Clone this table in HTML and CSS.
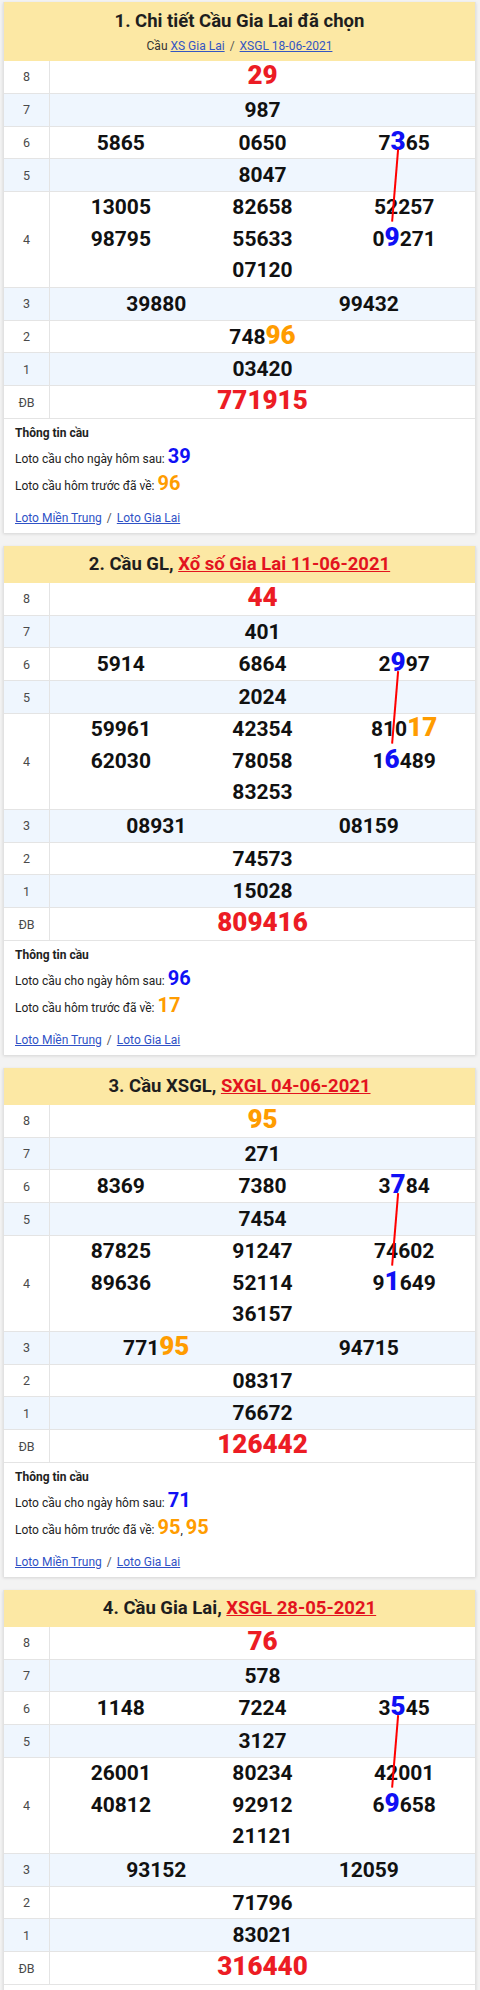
FILE: index.html
```html
<!DOCTYPE html>
<html lang="vi">
<head>
<meta charset="utf-8">
<title>Cầu Gia Lai</title>
<link rel="stylesheet" href="styles.css">
</head>
<body>
<div class="page">

<section class="card">
  <header class="card-head">
    <h2 class="card-title">1. Chi tiết Cầu Gia Lai đã chọn</h2>
    <p class="card-sub">Cầu <a href="#">XS Gia Lai</a><span class="sep">/</span><a href="#">XSGL 18-06-2021</a></p>
  </header>
  <div class="results">
    <div class="row"><div class="lbl">8</div><div class="val c1"><span><b class="big red">29</b></span></div></div>
    <div class="row alt"><div class="lbl">7</div><div class="val c1"><span>987</span></div></div>
    <div class="row"><div class="lbl">6</div><div class="val c3"><span>5865</span><span>0650</span><span>7<b class="big blue from">3</b>65</span></div></div>
    <div class="row alt"><div class="lbl">5</div><div class="val c1"><span>8047</span></div></div>
    <div class="row"><div class="lbl">4</div><div class="val c3 multi"><span>13005</span><span>82658</span><span>52257</span><span>98795</span><span>55633</span><span>0<b class="big blue to">9</b>271</span><span class="mid">07120</span></div></div>
    <div class="row alt"><div class="lbl">3</div><div class="val c2"><span>39880</span><span>99432</span></div></div>
    <div class="row"><div class="lbl">2</div><div class="val c1"><span>748<b class="big orange">96</b></span></div></div>
    <div class="row alt"><div class="lbl">1</div><div class="val c1"><span>03420</span></div></div>
    <div class="row"><div class="lbl">ĐB</div><div class="val c1"><span><b class="big red">771915</b></span></div></div>
    <svg class="bridge"><line stroke="#ff0000" stroke-width="2"/></svg>
  </div>
  <div class="info">
    <p class="info-title">Thông tin cầu</p>
    <p class="info-line">Loto cầu cho ngày hôm sau: <b class="blue">39</b></p>
    <p class="info-line">Loto cầu hôm trước đã về: <b class="orange">96</b></p>
    <p class="links"><a href="#">Loto Miền Trung</a><span class="sep">/</span><a href="#">Loto Gia Lai</a></p>
  </div>
</section>

<section class="card">
  <header class="card-head">
    <h2 class="card-title">2. Cầu GL, <a href="#" class="red-link">Xổ số Gia Lai 11-06-2021</a></h2>
  </header>
  <div class="results">
    <div class="row"><div class="lbl">8</div><div class="val c1"><span><b class="big red">44</b></span></div></div>
    <div class="row alt"><div class="lbl">7</div><div class="val c1"><span>401</span></div></div>
    <div class="row"><div class="lbl">6</div><div class="val c3"><span>5914</span><span>6864</span><span>2<b class="big blue from">9</b>97</span></div></div>
    <div class="row alt"><div class="lbl">5</div><div class="val c1"><span>2024</span></div></div>
    <div class="row"><div class="lbl">4</div><div class="val c3 multi"><span>59961</span><span>42354</span><span>810<b class="big orange">17</b></span><span>62030</span><span>78058</span><span>1<b class="big blue to">6</b>489</span><span class="mid">83253</span></div></div>
    <div class="row alt"><div class="lbl">3</div><div class="val c2"><span>08931</span><span>08159</span></div></div>
    <div class="row"><div class="lbl">2</div><div class="val c1"><span>74573</span></div></div>
    <div class="row alt"><div class="lbl">1</div><div class="val c1"><span>15028</span></div></div>
    <div class="row"><div class="lbl">ĐB</div><div class="val c1"><span><b class="big red">809416</b></span></div></div>
    <svg class="bridge"><line stroke="#ff0000" stroke-width="2"/></svg>
  </div>
  <div class="info">
    <p class="info-title">Thông tin cầu</p>
    <p class="info-line">Loto cầu cho ngày hôm sau: <b class="blue">96</b></p>
    <p class="info-line">Loto cầu hôm trước đã về: <b class="orange">17</b></p>
    <p class="links"><a href="#">Loto Miền Trung</a><span class="sep">/</span><a href="#">Loto Gia Lai</a></p>
  </div>
</section>

<section class="card">
  <header class="card-head">
    <h2 class="card-title">3. Cầu XSGL, <a href="#" class="red-link">SXGL 04-06-2021</a></h2>
  </header>
  <div class="results">
    <div class="row"><div class="lbl">8</div><div class="val c1"><span><b class="big orange">95</b></span></div></div>
    <div class="row alt"><div class="lbl">7</div><div class="val c1"><span>271</span></div></div>
    <div class="row"><div class="lbl">6</div><div class="val c3"><span>8369</span><span>7380</span><span>3<b class="big blue from">7</b>84</span></div></div>
    <div class="row alt"><div class="lbl">5</div><div class="val c1"><span>7454</span></div></div>
    <div class="row"><div class="lbl">4</div><div class="val c3 multi"><span>87825</span><span>91247</span><span>74602</span><span>89636</span><span>52114</span><span>9<b class="big blue to">1</b>649</span><span class="mid">36157</span></div></div>
    <div class="row alt"><div class="lbl">3</div><div class="val c2"><span>771<b class="big orange">95</b></span><span>94715</span></div></div>
    <div class="row"><div class="lbl">2</div><div class="val c1"><span>08317</span></div></div>
    <div class="row alt"><div class="lbl">1</div><div class="val c1"><span>76672</span></div></div>
    <div class="row"><div class="lbl">ĐB</div><div class="val c1"><span><b class="big red">126442</b></span></div></div>
    <svg class="bridge"><line stroke="#ff0000" stroke-width="2"/></svg>
  </div>
  <div class="info">
    <p class="info-title">Thông tin cầu</p>
    <p class="info-line">Loto cầu cho ngày hôm sau: <b class="blue">71</b></p>
    <p class="info-line">Loto cầu hôm trước đã về: <b class="orange">95</b>, <b class="orange">95</b></p>
    <p class="links"><a href="#">Loto Miền Trung</a><span class="sep">/</span><a href="#">Loto Gia Lai</a></p>
  </div>
</section>

<section class="card">
  <header class="card-head">
    <h2 class="card-title">4. Cầu Gia Lai, <a href="#" class="red-link">XSGL 28-05-2021</a></h2>
  </header>
  <div class="results">
    <div class="row"><div class="lbl">8</div><div class="val c1"><span><b class="big red">76</b></span></div></div>
    <div class="row alt"><div class="lbl">7</div><div class="val c1"><span>578</span></div></div>
    <div class="row"><div class="lbl">6</div><div class="val c3"><span>1148</span><span>7224</span><span>3<b class="big blue from">5</b>45</span></div></div>
    <div class="row alt"><div class="lbl">5</div><div class="val c1"><span>3127</span></div></div>
    <div class="row"><div class="lbl">4</div><div class="val c3 multi"><span>26001</span><span>80234</span><span>42001</span><span>40812</span><span>92912</span><span>6<b class="big blue to">9</b>658</span><span class="mid">21121</span></div></div>
    <div class="row alt"><div class="lbl">3</div><div class="val c2"><span>93152</span><span>12059</span></div></div>
    <div class="row"><div class="lbl">2</div><div class="val c1"><span>71796</span></div></div>
    <div class="row alt"><div class="lbl">1</div><div class="val c1"><span>83021</span></div></div>
    <div class="row"><div class="lbl">ĐB</div><div class="val c1"><span><b class="big red">316440</b></span></div></div>
    <svg class="bridge"><line stroke="#ff0000" stroke-width="2"/></svg>
  </div>
  <div class="card-end"></div>
</section>

</div>
<script src="script.js"></script>
</body>
</html>
```

FILE: styles.css
```css
* { box-sizing: border-box; }

body {
  margin: 0;
  background: #f3f3f3;
  font-family: Roboto, "Liberation Sans", Arial, sans-serif;
  color: #222;
}

.page {
  display: flex;
  flex-direction: column;
  gap: 13px;
  padding: 2px 4px 0 3px;
}

.card {
  background: #fff;
  border-left: 1px solid #e2e2e2;
  border-right: 1px solid #e2e2e2;
  box-shadow: 0 1px 3px rgba(0, 0, 0, 0.13);
}

.card-head {
  background: #fce8a4;
  text-align: center;
  padding: 6.5px 10px 6.5px;
}

.card-title {
  margin: 0;
  font-size: 18.5px;
  line-height: 24px;
  font-weight: 700;
  color: #1e1e1e;
}

.card-sub {
  margin: 4px 0 0;
  font-size: 12px;
  line-height: 18px;
  color: #333;
}

.card-sub a { color: #3456c2; }

.sep {
  margin: 0 5px;
  color: #555;
}

.red-link { color: #e3141e; }

.results { position: relative; }

.row {
  display: flex;
  border-bottom: 1px solid #e4e4e4;
}

.row.alt { background: #eff6fe; }

.lbl {
  flex: none;
  width: 46px;
  border-right: 1px solid #e4e4e4;
  display: flex;
  align-items: center;
  justify-content: center;
  font-size: 12.5px;
  font-weight: 400;
  color: #4a4a4a;
}

.val {
  flex: 1;
  display: grid;
  padding-top: 1px;
  font-weight: 700;
  font-size: 21px;
  line-height: 30.75px;
  text-align: center;
  color: #111;
}

.val.c1 { grid-template-columns: 1fr; }
.val.c2 { grid-template-columns: repeat(2, 1fr); }
.val.c3 { grid-template-columns: repeat(3, 1fr); }
.val.multi { line-height: 31.65px; padding-top: 0; }
.val .mid { grid-column: 2; }

.big {
  font-size: 26px;
  line-height: 20px;
}

.red { color: #ec1c24; }
.orange { color: #ff9c00; }
.blue { color: #1010f5; }

.bridge {
  position: absolute;
  left: 0;
  top: 0;
  width: 100%;
  height: 100%;
  overflow: visible;
  pointer-events: none;
}

.info {
  padding: 4px 11px 5px;
  font-size: 12px;
  color: #222;
}

.info p { margin: 0; }

.info-title {
  font-weight: 700;
  line-height: 20px;
  margin-bottom: 3.5px !important;
}

.info-line { line-height: 27px; }

.info-line b {
  font-size: 20px;
  line-height: 20px;
}

.links {
  margin-top: 7.5px !important;
  line-height: 20px;
}

.links a { color: #2f52c6; }

.card-end { height: 20px; }
```

FILE: script.js
```js
function drawBridges() {
  document.querySelectorAll('.results').forEach(function (r) {
    var a = r.querySelector('.from');
    var b = r.querySelector('.to');
    var line = r.querySelector('.bridge line');
    if (!a || !b || !line) return;
    var rr = r.getBoundingClientRect();
    var ra = a.getBoundingClientRect();
    var rb = b.getBoundingClientRect();
    line.setAttribute('x1', ra.left + ra.width / 2 - rr.left);
    line.setAttribute('y1', ra.top + ra.height * 0.79 - rr.top);
    line.setAttribute('x2', rb.left + rb.width / 2 - rr.left);
    line.setAttribute('y2', rb.top - rr.top);
  });
}
drawBridges();
window.addEventListener('load', drawBridges);
if (document.fonts && document.fonts.ready) document.fonts.ready.then(drawBridges);
```
